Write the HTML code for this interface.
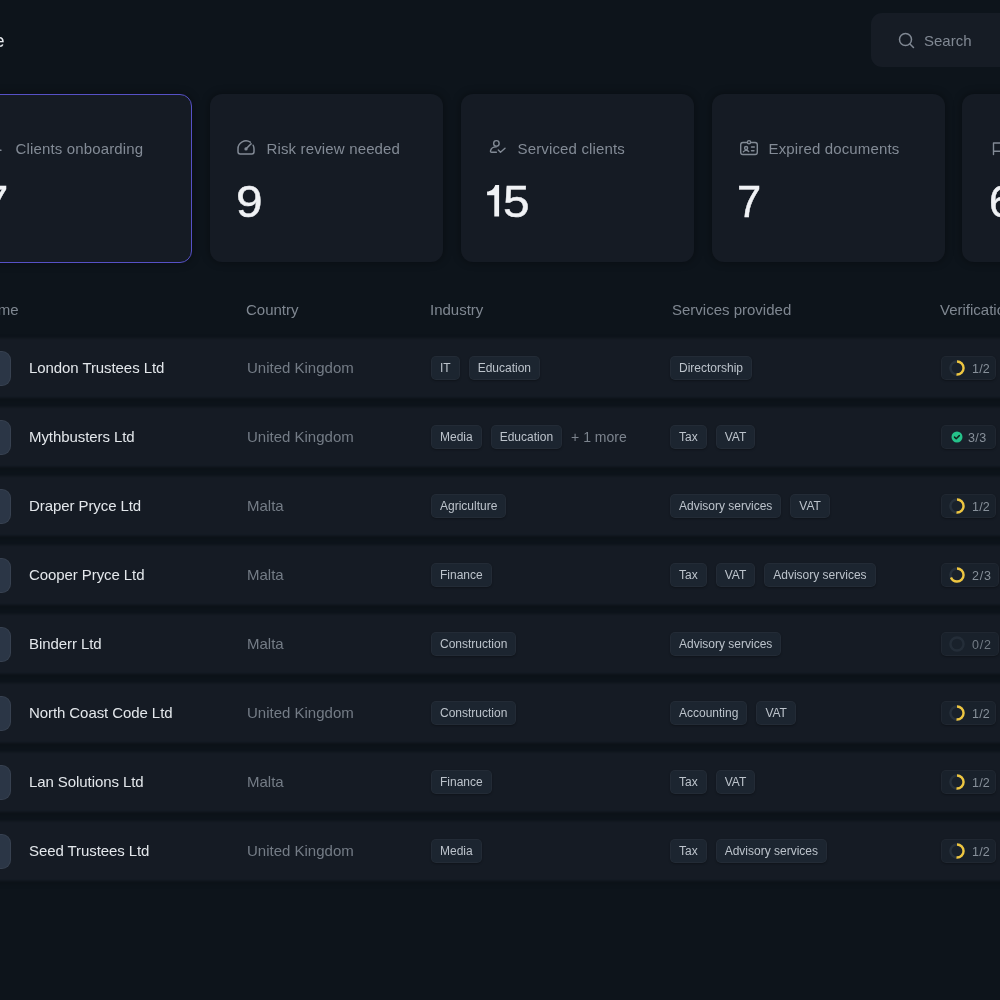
<!DOCTYPE html>
<html><head><meta charset="utf-8">
<style>
*{margin:0;padding:0;box-sizing:border-box}
html,body{width:1000px;height:1000px;overflow:hidden;background:#0d141b;font-family:"Liberation Sans",sans-serif;}
#wrap{position:absolute;left:0;top:0;width:1000px;height:1000px;will-change:transform}
.abs{position:absolute}
.title{left:-61.5px;top:31px;font-size:18px;color:#e8ebef;width:66px;text-align:right;white-space:nowrap}
.search{left:871px;top:13px;width:160px;height:53.5px;border-radius:11px;background:#161c25}
.search .lbl{position:absolute;left:53px;top:19px;font-size:15px;color:#808893}
.search svg{position:absolute;left:27px;top:19px}
.card{top:94px;width:232.5px;height:168px;border-radius:12px;background:#151b24;box-shadow:0 0 9px rgba(0,0,0,0.4)}
.card.sel{border:1.7px solid #5651c6;height:168.5px}
.ct{top:139.7px;font-size:15px;color:#838b96;white-space:nowrap;letter-spacing:0.15px;margin-left:-0.5px}
.num{top:173.5px;font-size:43.5px;line-height:56px;color:#f0f2f5;-webkit-text-stroke:0.45px #f0f2f5;white-space:nowrap}
.th{top:301px;font-size:15px;color:#7f8791;white-space:nowrap}
.row{left:-20px;width:1040px;height:60px;background:#151b24;box-shadow:0 2px 5px rgba(0,0,0,0.22);filter:blur(1.2px)}
.av{left:-23px;width:34.3px;height:35px;border-radius:9px;background:#2b3646;border:1px solid rgba(255,255,255,0.06)}
.nm{left:29px;font-size:15px;color:#e3e7eb;white-space:nowrap;letter-spacing:-0.08px}
.co{left:247px;font-size:15px;color:#747c86;white-space:nowrap}
.tags{display:flex;gap:9px;align-items:center}
.tag{height:24px;line-height:22px;padding:0 8px;border-radius:5px;background:#1c2530;border:1px solid rgba(255,255,255,0.03);font-size:12px;color:#bcc3cb;white-space:nowrap;box-shadow:0 1px 2px rgba(0,0,0,0.3)}
.more{font-size:14px;color:#7c848e;white-space:nowrap}
.ver{left:941px;height:24px;width:55.5px;border-radius:5px;background:#19212b;border:1px solid rgba(255,255,255,0.03);display:flex;align-items:center;padding:0 0 0 7px;gap:7px;font-size:12.5px;color:#87909a;white-space:nowrap;box-shadow:0 1px 2px rgba(0,0,0,0.3)}
.ver span{position:relative;top:0.5px}
.ver.vd{gap:3px}
.ver.vz svg,.ver.vz span{opacity:0.8}

</style></head><body><div id="wrap">
<div class="abs title">Home</div>
<div class="abs search"><svg width="18" height="18" viewBox="0 0 18 18"><circle cx="7.5" cy="7.5" r="6" fill="none" stroke="#808893" stroke-width="1.5"/><path d="M12 12 L15.5 15.5" stroke="#808893" stroke-width="1.5" stroke-linecap="round"/></svg><div class="lbl">Search</div></div>
<div class="abs card sel" style="left:-41px"></div><div class="abs ct" style="left:16px">Clients onboarding</div><div class="abs num" style="left:-16px">7</div>
<div class="abs card" style="left:210px"></div><div class="abs ct" style="left:267px">Risk review needed</div><div class="abs num" style="left:235px"><span style="position:relative;left:1px;display:inline-block;transform:scaleX(1.1);transform-origin:left">9</span></div>
<div class="abs card" style="left:461px"></div><div class="abs ct" style="left:518px">Serviced clients</div><div class="abs num" style="left:486px"><span style="position:relative;left:16.5px;display:inline-block;transform:scaleX(1.1);transform-origin:left">5</span></div>
<svg class="abs" style="left:480px;top:180px" width="24" height="42" viewBox="480 180 24 42"><path d="M499.1 184.9 V216.5 H494.3 V195.3 H487.1 V191.5 C490.4 191.2 493.8 189.6 495.3 184.9 Z" fill="#f0f2f5"/></svg><div class="abs card" style="left:712px"></div><div class="abs ct" style="left:769px">Expired documents</div><div class="abs num" style="left:737px">7</div>
<div class="abs card" style="left:962px"></div><div class="abs ct" style="left:1019px">Pending</div><div class="abs num" style="left:987px"><span style="position:relative;left:2px">6</span></div>
<svg class="abs" style="left:-16px;top:134px" width="20" height="26" viewBox="-16 134 20 26" fill="none" stroke="#828a95" stroke-width="1.4" stroke-linecap="round" stroke-linejoin="round"><path d="M-12 152.5 C-10 149 -6 148 -3 148.5 M-1 150.2 L1 150.2"/></svg><svg class="abs" style="left:230px;top:134px" width="30" height="26" viewBox="230 134 30 26" fill="none" stroke="#828a95" stroke-width="1.5" stroke-linecap="round" stroke-linejoin="round"><path d="M250.36 142.19 A8.0 8.0 0 0 0 238.00 148.9 V151.70 A2.2 2.2 0 0 0 240.20 153.9 H251.80 A2.2 2.2 0 0 0 254.00 151.70 V148.9 A8.0 8.0 0 0 0 253.13 145.27"/><path d="M246 148.9 L251.09 143.81"/><circle cx="246" cy="148.9" r="0.9" fill="#828a95"/></svg><svg class="abs" style="left:484px;top:134px" width="26" height="26" viewBox="484 134 26 26" fill="none" stroke="#828a95" stroke-width="1.4" stroke-linecap="round" stroke-linejoin="round"><circle cx="496.4" cy="143.4" r="2.75"/><path d="M496.4 152.25 H491.6 Q490.3 152.25 490.5 150.9 C491 148.4 493.2 146.9 496.2 146.9"/><path d="M498.3 150 L500.5 152.2 L505 148.2"/></svg><svg class="abs" style="left:734px;top:134px" width="30" height="26" viewBox="734 134 30 26" fill="none" stroke="#828a95" stroke-width="1.4" stroke-linecap="round" stroke-linejoin="round"><path d="M747.3 142.45 H742.9 A2.2 2.2 0 0 0 740.7 144.65 V152.35 A2.2 2.2 0 0 0 742.9 154.55 H755.1 A2.2 2.2 0 0 0 757.3 152.35 V144.65 A2.2 2.2 0 0 0 755.1 142.45 H750.7"/><circle cx="749" cy="142.2" r="1.6"/><circle cx="746.1" cy="148" r="1.55"/><path d="M743.4 151.7 Q746 149 748.7 151.6"/><path d="M751.5 147 H754.3 M751.5 150.75 H754"/></svg><svg class="abs" style="left:985px;top:134px" width="15" height="26" viewBox="985 134 15 26" fill="none" stroke="#828a95" stroke-width="1.4" stroke-linecap="round" stroke-linejoin="round"><path d="M993.5 154.5 V143 H1004 L1001 147 L1004 151.3 H993.5"/></svg>
<div class="abs th" style="left:-21.5px">Name</div>
<div class="abs th" style="left:246px">Country</div>
<div class="abs th" style="left:430px">Industry</div>
<div class="abs th" style="left:672px">Services provided</div>
<div class="abs th" style="left:940px">Verification</div>
<div class="abs row" style="top:338px"></div>
<div class="abs av" style="top:351px"></div>
<div class="abs nm" style="top:359px">London Trustees Ltd</div>
<div class="abs co" style="top:359px">United Kingdom</div>
<div class="abs tags" style="left:431px;top:356px"><div class="tag">IT</div><div class="tag">Education</div></div>
<div class="abs tags" style="left:670px;top:356px"><div class="tag">Directorship</div></div>
<div class="abs ver" style="top:356px;width:54.8px"><svg width="16" height="16" viewBox="0 0 16 16"><circle cx="8" cy="8" r="6.55" fill="none" stroke="#27313c" stroke-width="2.4"/><circle cx="8" cy="8" r="6.55" fill="none" stroke="#eec640" stroke-width="2.4" stroke-dasharray="20.58 41.15" transform="rotate(-90 8 8)"/></svg><span style="letter-spacing:0.2px">1/2</span></div>
<div class="abs row" style="top:407px"></div>
<div class="abs av" style="top:420px"></div>
<div class="abs nm" style="top:428px">Mythbusters Ltd</div>
<div class="abs co" style="top:428px">United Kingdom</div>
<div class="abs tags" style="left:431px;top:425px"><div class="tag">Media</div><div class="tag">Education</div><div class="more">+ 1 more</div></div>
<div class="abs tags" style="left:670px;top:425px"><div class="tag">Tax</div><div class="tag">VAT</div></div>
<div class="abs ver vd" style="top:425px;width:54.8px"><svg width="16" height="16" viewBox="0 0 16 16"><circle cx="8" cy="8" r="5.5" fill="#25c28a"/><path d="M5.5 8.1l1.7 1.6 3.1-3.1" fill="none" stroke="#10231d" stroke-width="1.5" stroke-linecap="round" stroke-linejoin="round"/></svg><span style="letter-spacing:0.4px">3/3</span></div>
<div class="abs row" style="top:476px"></div>
<div class="abs av" style="top:489px"></div>
<div class="abs nm" style="top:497px">Draper Pryce Ltd</div>
<div class="abs co" style="top:497px">Malta</div>
<div class="abs tags" style="left:431px;top:494px"><div class="tag">Agriculture</div></div>
<div class="abs tags" style="left:670px;top:494px"><div class="tag">Advisory services</div><div class="tag">VAT</div></div>
<div class="abs ver" style="top:494px;width:54.8px"><svg width="16" height="16" viewBox="0 0 16 16"><circle cx="8" cy="8" r="6.55" fill="none" stroke="#27313c" stroke-width="2.4"/><circle cx="8" cy="8" r="6.55" fill="none" stroke="#eec640" stroke-width="2.4" stroke-dasharray="20.58 41.15" transform="rotate(-90 8 8)"/></svg><span style="letter-spacing:0.2px">1/2</span></div>
<div class="abs row" style="top:545px"></div>
<div class="abs av" style="top:558px"></div>
<div class="abs nm" style="top:566px">Cooper Pryce Ltd</div>
<div class="abs co" style="top:566px">Malta</div>
<div class="abs tags" style="left:431px;top:563px"><div class="tag">Finance</div></div>
<div class="abs tags" style="left:670px;top:563px"><div class="tag">Tax</div><div class="tag">VAT</div><div class="tag">Advisory services</div></div>
<div class="abs ver" style="top:563px;width:57.5px"><svg width="16" height="16" viewBox="0 0 16 16"><circle cx="8" cy="8" r="6.55" fill="none" stroke="#27313c" stroke-width="2.4"/><circle cx="8" cy="8" r="6.55" fill="none" stroke="#eec640" stroke-width="2.4" stroke-dasharray="27.44 41.15" transform="rotate(-90 8 8)"/></svg><span style="letter-spacing:0.8px">2/3</span></div>
<div class="abs row" style="top:614px"></div>
<div class="abs av" style="top:627px"></div>
<div class="abs nm" style="top:635px">Binderr Ltd</div>
<div class="abs co" style="top:635px">Malta</div>
<div class="abs tags" style="left:431px;top:632px"><div class="tag">Construction</div></div>
<div class="abs tags" style="left:670px;top:632px"><div class="tag">Advisory services</div></div>
<div class="abs ver vz" style="top:632px;width:57.5px"><svg width="16" height="16" viewBox="0 0 16 16"><circle cx="8" cy="8" r="6.55" fill="none" stroke="#27313c" stroke-width="2.4"/></svg><span style="letter-spacing:0.8px">0/2</span></div>
<div class="abs row" style="top:683px"></div>
<div class="abs av" style="top:696px"></div>
<div class="abs nm" style="top:704px">North Coast Code Ltd</div>
<div class="abs co" style="top:704px">United Kingdom</div>
<div class="abs tags" style="left:431px;top:701px"><div class="tag">Construction</div></div>
<div class="abs tags" style="left:670px;top:701px"><div class="tag">Accounting</div><div class="tag">VAT</div></div>
<div class="abs ver" style="top:701px;width:54.8px"><svg width="16" height="16" viewBox="0 0 16 16"><circle cx="8" cy="8" r="6.55" fill="none" stroke="#27313c" stroke-width="2.4"/><circle cx="8" cy="8" r="6.55" fill="none" stroke="#eec640" stroke-width="2.4" stroke-dasharray="20.58 41.15" transform="rotate(-90 8 8)"/></svg><span style="letter-spacing:0.2px">1/2</span></div>
<div class="abs row" style="top:752px"></div>
<div class="abs av" style="top:765px"></div>
<div class="abs nm" style="top:773px">Lan Solutions Ltd</div>
<div class="abs co" style="top:773px">Malta</div>
<div class="abs tags" style="left:431px;top:770px"><div class="tag">Finance</div></div>
<div class="abs tags" style="left:670px;top:770px"><div class="tag">Tax</div><div class="tag">VAT</div></div>
<div class="abs ver" style="top:770px;width:54.8px"><svg width="16" height="16" viewBox="0 0 16 16"><circle cx="8" cy="8" r="6.55" fill="none" stroke="#27313c" stroke-width="2.4"/><circle cx="8" cy="8" r="6.55" fill="none" stroke="#eec640" stroke-width="2.4" stroke-dasharray="20.58 41.15" transform="rotate(-90 8 8)"/></svg><span style="letter-spacing:0.2px">1/2</span></div>
<div class="abs row" style="top:821px"></div>
<div class="abs av" style="top:834px"></div>
<div class="abs nm" style="top:842px">Seed Trustees Ltd</div>
<div class="abs co" style="top:842px">United Kingdom</div>
<div class="abs tags" style="left:431px;top:839px"><div class="tag">Media</div></div>
<div class="abs tags" style="left:670px;top:839px"><div class="tag">Tax</div><div class="tag">Advisory services</div></div>
<div class="abs ver" style="top:839px;width:54.8px"><svg width="16" height="16" viewBox="0 0 16 16"><circle cx="8" cy="8" r="6.55" fill="none" stroke="#27313c" stroke-width="2.4"/><circle cx="8" cy="8" r="6.55" fill="none" stroke="#eec640" stroke-width="2.4" stroke-dasharray="20.58 41.15" transform="rotate(-90 8 8)"/></svg><span style="letter-spacing:0.2px">1/2</span></div>
</div></body></html>
